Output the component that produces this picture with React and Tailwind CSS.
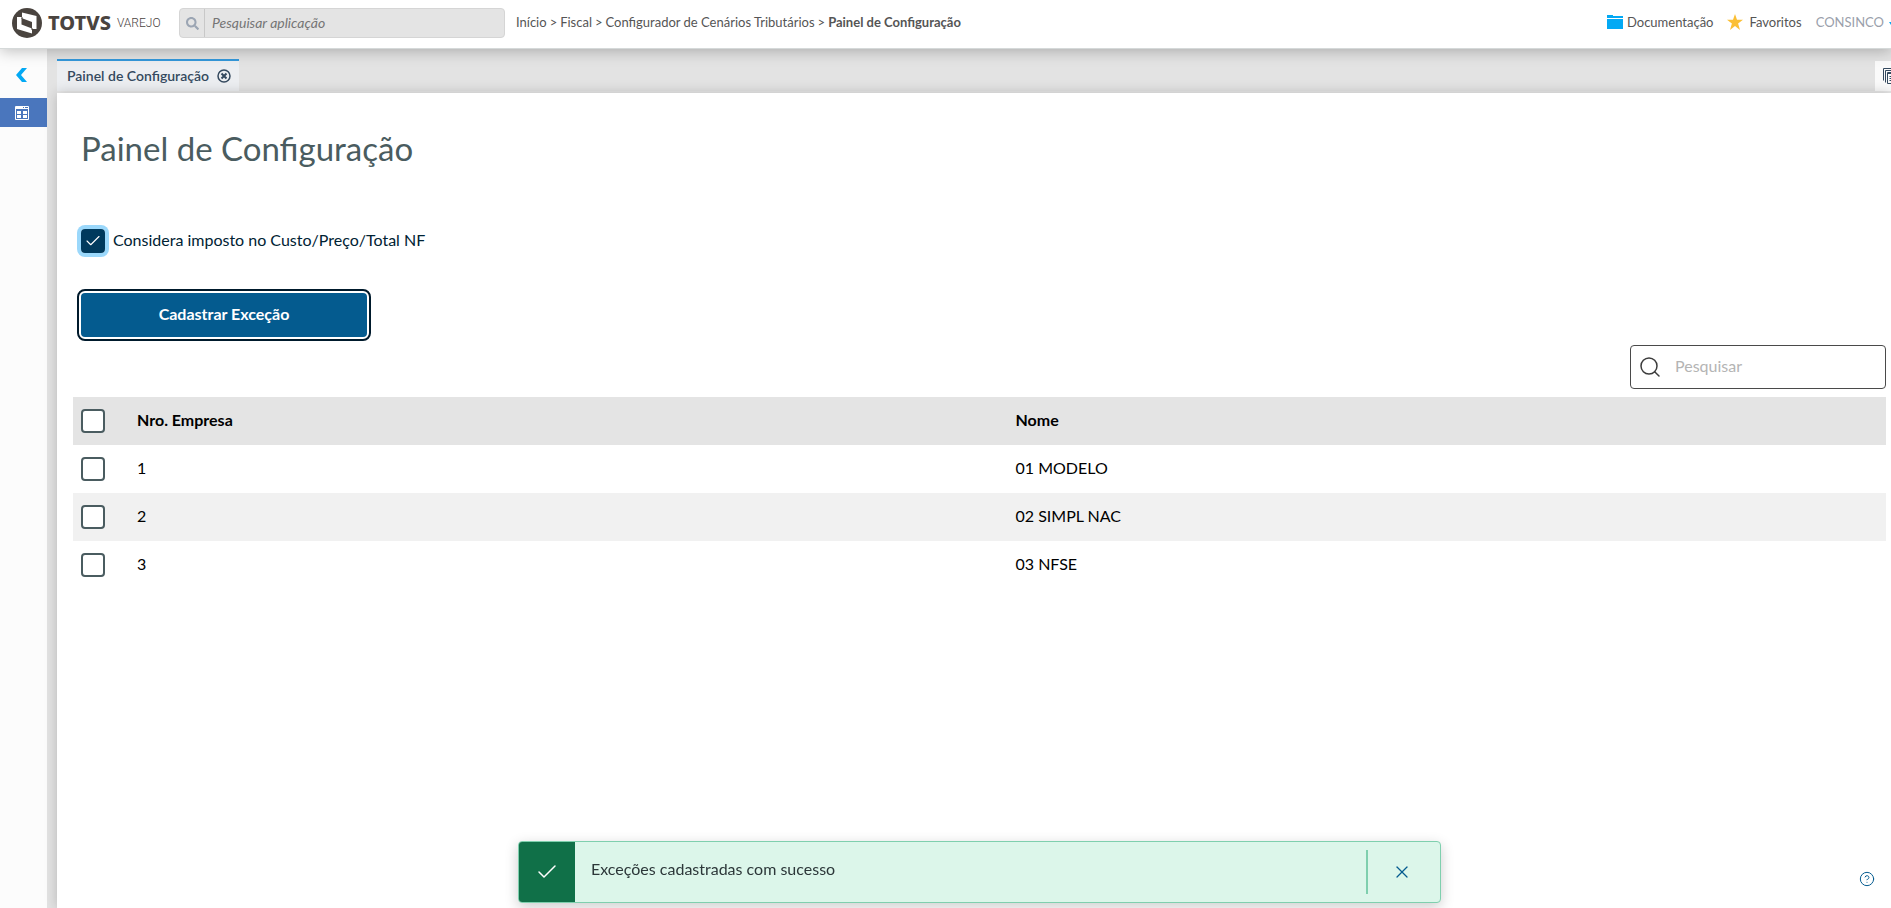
import React, { useState } from "react";
import { Check, CircleHelp, Search, X } from "lucide-react";
import { FaSearch } from "react-icons/fa";

const empresas = [
  { id: 1, nome: "01 MODELO" },
  { id: 2, nome: "02 SIMPL NAC" },
  { id: 3, nome: "03 NFSE" },
];

const boxClass =
  "block size-6 appearance-none rounded-sm border-2 border-[#4a5c60] bg-white checked:border-[#003a5d] checked:bg-[#003a5d]";

const Logo = () => (
  <a href="#" className="flex w-[148px] shrink-0 items-center text-[#4a443f]">
    <svg viewBox="0 0 30 30" className="size-[30px] shrink-0">
      <circle cx="15" cy="15" r="15" fill="#4a443f" />
      <path d="M10 4.500 L24.500 8 V21 H20 V25.500 L5 21 V9 H10 Z" fill="#fff" />
      <path d="M9.500 10 L20 14 V20.500 L9.500 16.500 Z" fill="#4a443f" />
      <path d="M10 9v2M20 20v2" stroke="#4a443f" />
    </svg>
    <span className="ml-1.5 font-['Noto_Sans',sans-serif] text-xl leading-none font-extrabold">
      TOTVS
    </span>
    <span className="ml-1.5 font-['Roboto',sans-serif] text-xs leading-none font-light">
      VAREJO
    </span>
  </a>
);

const Header = () => (
  <header className="relative z-10 flex h-[49px] items-center border-b border-[#d5d9d9] bg-white pt-2 pb-[10px] pl-3 text-[13px] text-[#555] shadow-[0_2px_14px_rgba(0,0,0,0.25)]">
    <Logo />
    <div className="ml-[19px] flex h-[30px] w-[326px] shrink-0 items-center rounded-sm border border-[#d5d5d5] bg-[#e4e4e4]">
      <span className="flex h-full w-[25px] items-center justify-center border-r border-[#c8c8c8]">
        <FaSearch className="size-[13px] text-[#9ba5b3]" />
      </span>
      <input
        type="text"
        aria-label="Pesquisar aplicação"
        placeholder="Pesquisar aplicação"
        className="min-w-0 flex-1 bg-transparent px-[7px] text-sm italic outline-none placeholder:text-[#757575]"
      />
    </div>
    <nav className="ml-[11px] flex shrink-0 gap-[3px] whitespace-nowrap">
      <a href="#">Início</a>
      <span>&gt;</span>
      <a href="#">Fiscal</a>
      <span>&gt;</span>
      <a href="#">Configurador de Cenários Tributários</a>
      <span>&gt;</span>
      <b>Painel de Configuração</b>
    </nav>
    <div className="ml-auto flex min-w-0 items-center overflow-hidden whitespace-nowrap">
      <a href="#" className="flex items-center gap-1">
        <svg viewBox="0 0 16 14" className="mb-0.5 h-3.5 w-4" fill="#03a9f4">
          <path d="M0 0h6v1h10v2H0zM0 4h16v10H0z" />
        </svg>
        Documentação
      </a>
      <a href="#" className="ml-3.5 flex items-center gap-1.5">
        <svg viewBox="0 0 16 16" className="mb-0.5 size-4" fill="#fbbf34">
          <path d="M8 0l2 5.800h6l-4.900 3.600L13 16l-5-4-5 4 1.900-6.600L0 5.800h6z" />
        </svg>
        Favoritos
      </a>
      <button type="button" className="ml-3.5 flex items-center gap-[5px] text-[#9aa0ab]">
        CONSINCO
        <svg viewBox="0 0 2 3" className="h-[3px] w-0.5" fill="#03a9f4">
          <path d="M0 0h2v3z" />
        </svg>
      </button>
    </div>
  </header>
);

const Sidebar = () => (
  <aside className="w-[47px] shrink-0 bg-[#fcfcfc]">
    <button
      type="button"
      aria-label="Recolher menu"
      className="flex h-[49px] w-full items-center pt-0.5 pl-4"
    >
      <svg viewBox="0 0 11 14" className="h-3.5 w-[11px]" fill="#03a9f4">
        <path d="M6 0h5L5 7l6 7H6L0 7z" />
      </svg>
    </button>
    <button
      type="button"
      aria-label="Painel"
      className="flex h-[29px] w-full items-center bg-[#4a76bd] pl-[15px]"
    >
      <svg viewBox="0 0 14 14" className="size-3.5">
        <rect width="14" height="14" rx="1" fill="#fff" />
        <path
          d="M1 3h12v10H1zM8 1h1v1H8zM10 1h3v1h-3z"
          fill="#4a76bd"
        />
        <path d="M2 5h4v3H2zM8 5h4v3H8zM2 9h4v3H2zM8 9h4v3H8z" fill="#fff" />
      </svg>
    </button>
  </aside>
);

const TabBar = () => (
  <div className="flex h-11 items-end justify-between border-b-2 border-[#e9e9e9]">
    <div className="flex h-8 items-center gap-2 border-t-2 border-[#3498db] bg-[#eceef1] pr-2 pl-2.5 text-sm font-semibold text-[#34495e]">
      Painel de Configuração
      <button type="button" aria-label="Fechar aba">
        <svg viewBox="0 0 14 14" className="size-3.5" fill="none" stroke="#34495e">
          <circle cx="7" cy="7" r="6" strokeWidth="1.500" />
          <path d="M4.500 4.500l5 5M9.500 4.500l-5 5" strokeWidth="2" />
        </svg>
      </button>
    </div>
    <button
      type="button"
      aria-label="Abas abertas"
      className="flex h-[30px] w-4 items-center overflow-hidden bg-[#fafafa] pl-2"
    >
      <svg viewBox="0 0 16 16" className="size-4 shrink-0" fill="none" stroke="#34495e">
        <path d="M.5 12.500V.5h12M2.500 14.500v-12h12M4.500 4.500h11v11h-11zM4.500 5.500h11M6.500 8.500h7M6.500 10.500h7M6.500 12.500h7" />
      </svg>
    </button>
  </div>
);

const Toast = ({ onClose }) => (
  <div
    role="status"
    className="mx-auto flex h-[62px] w-[923px] max-w-full overflow-hidden rounded-sm border border-[#7fcfae] bg-[#dcf6ea] shadow-[0_4px_14px_rgba(0,0,0,0.2)]"
  >
    <div className="flex w-14 items-center justify-center bg-[#107048]">
      <Check className="size-6 text-white" strokeWidth={1.5} />
    </div>
    <p className="flex-1 self-center px-4 pb-1.5 text-base text-[#2c3739]">
      Exceções cadastradas com sucesso
    </p>
    <button
      type="button"
      aria-label="Fechar"
      onClick={onClose}
      className="my-2 flex w-[74px] items-center border-l-2 border-[#7fcfae] pl-6"
    >
      <X className="size-5 text-[#045b8f]" strokeWidth={1.5} />
    </button>
  </div>
);

export default function App() {
  const [imposto, setImposto] = useState(true);
  const [selecionadas, setSelecionadas] = useState([]);
  const [toast, setToast] = useState(true);

  const toggle = (id) =>
    setSelecionadas((atual) =>
      atual.includes(id) ? atual.filter((item) => item !== id) : [...atual, id]
    );

  const toggleTodas = () =>
    setSelecionadas(
      selecionadas.length === empresas.length ? [] : empresas.map((e) => e.id)
    );

  return (
    <div className="flex h-screen flex-col overflow-hidden bg-[#e3e3e3] font-['Lato',sans-serif]">
      <Header />
      <div className="flex min-h-0 flex-1">
        <Sidebar />
        <div className="flex min-w-0 flex-1 flex-col pl-2.5">
          <TabBar />
          <main className="flex flex-1 flex-col bg-white pr-[5px] pl-4 shadow-[0_0_12px_rgba(0,0,0,0.2)]">
            <h1 className="px-2 pt-[33px] text-[33px] leading-[44px] font-normal text-[#4a5c60]">
              Painel de Configuração
            </h1>

            <div className="mt-[59px] flex items-center gap-2 px-2">
              <span className="grid rounded-sm ring-4 ring-[#9bd8fb]">
                <input
                  id="imposto"
                  type="checkbox"
                  checked={imposto}
                  onChange={() => setImposto(!imposto)}
                  className={`${boxClass} col-start-1 row-start-1`}
                />
                {imposto && (
                  <Check
                    className="pointer-events-none col-start-1 row-start-1 size-[18px] place-self-center text-white"
                    strokeWidth={1.5}
                  />
                )}
              </span>
              <label htmlFor="imposto" className="pb-0.5 text-base leading-[22px] text-[#002233]">
                Considera imposto no Custo/Preço/Total NF
              </label>
            </div>

            <div className="mt-10 px-2">
              <button
                type="button"
                className="h-11 w-[286px] rounded-sm bg-[#045b8f] px-12 pb-0.5 text-base font-bold text-white outline-2 outline-offset-2 outline-[#001a2c]"
              >
                Cadastrar Exceção
              </button>
            </div>

            <div className="mt-2 flex h-11 w-64 items-center self-end rounded-sm border border-[#4a4a4a] pl-[7px]">
              <Search className="size-6 shrink-0 text-[#3c3c3c]" strokeWidth={1.5} />
              <input
                type="search"
                aria-label="Pesquisar"
                placeholder="Pesquisar"
                className="min-w-0 flex-1 bg-transparent px-[13px] pb-0.5 text-base outline-none placeholder:text-[#b4b4b4]"
              />
            </div>

            <table className="mt-2 w-full table-fixed text-left text-base text-black">
              <thead>
                <tr className="h-12 bg-[#e4e4e4]">
                  <th className="w-14 px-2">
                    <input
                      type="checkbox"
                      aria-label="Selecionar todas"
                      checked={selecionadas.length === empresas.length}
                      onChange={toggleTodas}
                      className={boxClass}
                    />
                  </th>
                  <th className="px-2 pb-0.5 font-bold">Nro. Empresa</th>
                  <th className="px-2 pb-0.5 font-bold">Nome</th>
                </tr>
              </thead>
              <tbody>
                {empresas.map((empresa) => (
                  <tr key={empresa.id} className="h-12 even:bg-[#f1f1f1]">
                    <td className="px-2">
                      <input
                        type="checkbox"
                        aria-label={`Selecionar ${empresa.nome}`}
                        checked={selecionadas.includes(empresa.id)}
                        onChange={() => toggle(empresa.id)}
                        className={boxClass}
                      />
                    </td>
                    <td className="px-2 pb-0.5">{empresa.id}</td>
                    <td className="px-2 pb-0.5">{empresa.nome}</td>
                  </tr>
                ))}
              </tbody>
            </table>
          </main>
        </div>
      </div>

      {/* Aviso e ajuda sobre o conteúdo */}
      <div className="fixed right-[5px] bottom-[5px] left-[73px] z-20">
        {toast && <Toast onClose={() => setToast(false)} />}
      </div>
      <a
        href="#"
        aria-label="Ajuda"
        className="fixed right-4 bottom-[21px] z-20 text-[#045b8f]"
      >
        <CircleHelp className="size-4" strokeWidth={1.5} />
      </a>
    </div>
  );
}
